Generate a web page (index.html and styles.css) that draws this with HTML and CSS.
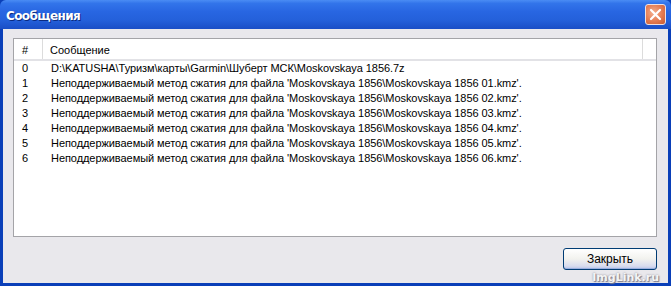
FILE: index.html
```html
<!DOCTYPE html>
<html lang="ru">
<head>
    <meta charset="UTF-8">
    <title>Сообщения</title>
    <link rel="stylesheet" href="styles.css">
</head>
<body>
    <div class="window">
        <div class="titlebar">
            <span class="title">Сообщения</span>
            <span class="close-btn">
                <svg width="13" height="13" viewBox="0 0 13 13">
                    <path d="M2 2 L11 11 M11 2 L2 11" stroke="#fff" stroke-width="2.2" stroke-linecap="round"/>
                </svg>
            </span>
        </div>
        <div class="client">
            <div class="listview">
                <div class="list-header">
                    <div class="col-num">#</div>
                    <div class="col-msg">Сообщение</div>
                    <div class="col-rest"></div>
                </div>
                <div class="list-body">
                    <div class="row"><span class="num">0</span><span class="msg">D:\KATUSHA\Туризм\карты\Garmin\Шуберт МСК\Moskovskaya 1856.7z</span></div>
                    <div class="row"><span class="num">1</span><span class="msg">Неподдерживаемый метод сжатия для файла 'Moskovskaya 1856\Moskovskaya 1856 01.kmz'.</span></div>
                    <div class="row"><span class="num">2</span><span class="msg">Неподдерживаемый метод сжатия для файла 'Moskovskaya 1856\Moskovskaya 1856 02.kmz'.</span></div>
                    <div class="row"><span class="num">3</span><span class="msg">Неподдерживаемый метод сжатия для файла 'Moskovskaya 1856\Moskovskaya 1856 03.kmz'.</span></div>
                    <div class="row"><span class="num">4</span><span class="msg">Неподдерживаемый метод сжатия для файла 'Moskovskaya 1856\Moskovskaya 1856 04.kmz'.</span></div>
                    <div class="row"><span class="num">5</span><span class="msg">Неподдерживаемый метод сжатия для файла 'Moskovskaya 1856\Moskovskaya 1856 05.kmz'.</span></div>
                    <div class="row"><span class="num">6</span><span class="msg">Неподдерживаемый метод сжатия для файла 'Moskovskaya 1856\Moskovskaya 1856 06.kmz'.</span></div>
                </div>
            </div>
            <div class="footer">
                <button class="btn">Закрыть</button>
            </div>
        </div>
        <div class="watermark">ImgLink.ru</div>
    </div>
</body>
</html>
```

FILE: styles.css
```css
body {
    margin: 0;
    font-family: "Liberation Sans", Arial, sans-serif;
    font-size: 11px;
    background-color: #e9e8ec;
}

.window {
    position: relative;
    width: 671px;
    height: 286px;
    box-sizing: border-box;
    display: flex;
    flex-direction: column;
    background-color: #0a3fb8;
    padding: 0 3px 3px 3px;
}

.titlebar {
    height: 29px;
    margin: 0 -3px;
    padding: 0 5px 0 6px;
    display: flex;
    align-items: center;
    justify-content: space-between;
    background: linear-gradient(to bottom, #4a8cf4 0%, #3274ea 12%, #2866e2 40%, #2460da 70%, #1a4ec6 100%);
    border-radius: 6px 6px 0 0;
}

.title {
    color: #fff;
    font-family: "DejaVu Sans", sans-serif;
    font-weight: bold;
    font-size: 12px;
    letter-spacing: -0.6px;
    text-shadow: 1px 1px 0 #0a2a80;
    padding-top: 2px;
}

.close-btn {
    width: 21px;
    height: 21px;
    box-sizing: border-box;
    border: 1px solid #f0e0e0;
    border-radius: 3px;
    background: radial-gradient(circle at 40% 40%, #f4b090 0%, #e47a50 55%, #c85a30 100%);
    display: flex;
    align-items: center;
    justify-content: center;
}

.client {
    flex: 1;
    display: flex;
    flex-direction: column;
    background-color: #e9e8ec;
    padding: 9px 11px 13px 10px;
}

.listview {
    flex: 1;
    background-color: #fff;
    border: 1px solid #a4a4a8;
    display: flex;
    flex-direction: column;
}

.list-header {
    display: flex;
    height: 22px;
    border-bottom: 2px solid #e2e2e6;
    box-sizing: border-box;
    line-height: 22px;
}

.col-num {
    width: 29px;
    padding-left: 8px;
    box-sizing: border-box;
    border-right: 1px solid #dcdcdc;
}

.col-msg {
    width: 600px;
    padding-left: 7px;
    box-sizing: border-box;
    border-right: 1px solid #dcdcdc;
}

.col-rest {
    flex: 1;
}

.list-body {
    padding-top: 0;
}

.row {
    display: flex;
    height: 15px;
    line-height: 15px;
}

.num {
    width: 37px;
    padding-left: 8px;
    box-sizing: border-box;
}

.msg {
    white-space: nowrap;
    letter-spacing: -0.06px;
}

.footer {
    display: flex;
    justify-content: flex-end;
    padding-top: 11px;
}

.btn {
    width: 94px;
    height: 22px;
    font-family: "Liberation Sans", Arial, sans-serif;
    font-size: 12px;
    color: #000;
    border: 1px solid #003c74;
    border-radius: 3px;
    background: linear-gradient(to bottom, #ffffff 0%, #f2f2ee 50%, #d8dcef 85%, #b8c4e8 100%);
    box-shadow: inset 0 -1px 0 #9cb0e0;
    padding: 0;
}

.watermark {
    position: absolute;
    right: 12px;
    bottom: 2px;
    font-family: "DejaVu Sans", sans-serif;
    font-weight: bold;
    font-size: 11px;
    color: #f4f4f4;
    text-shadow: 0 0 2px #8a8a96, 1px 1px 1px #7a7a88;
}
```
